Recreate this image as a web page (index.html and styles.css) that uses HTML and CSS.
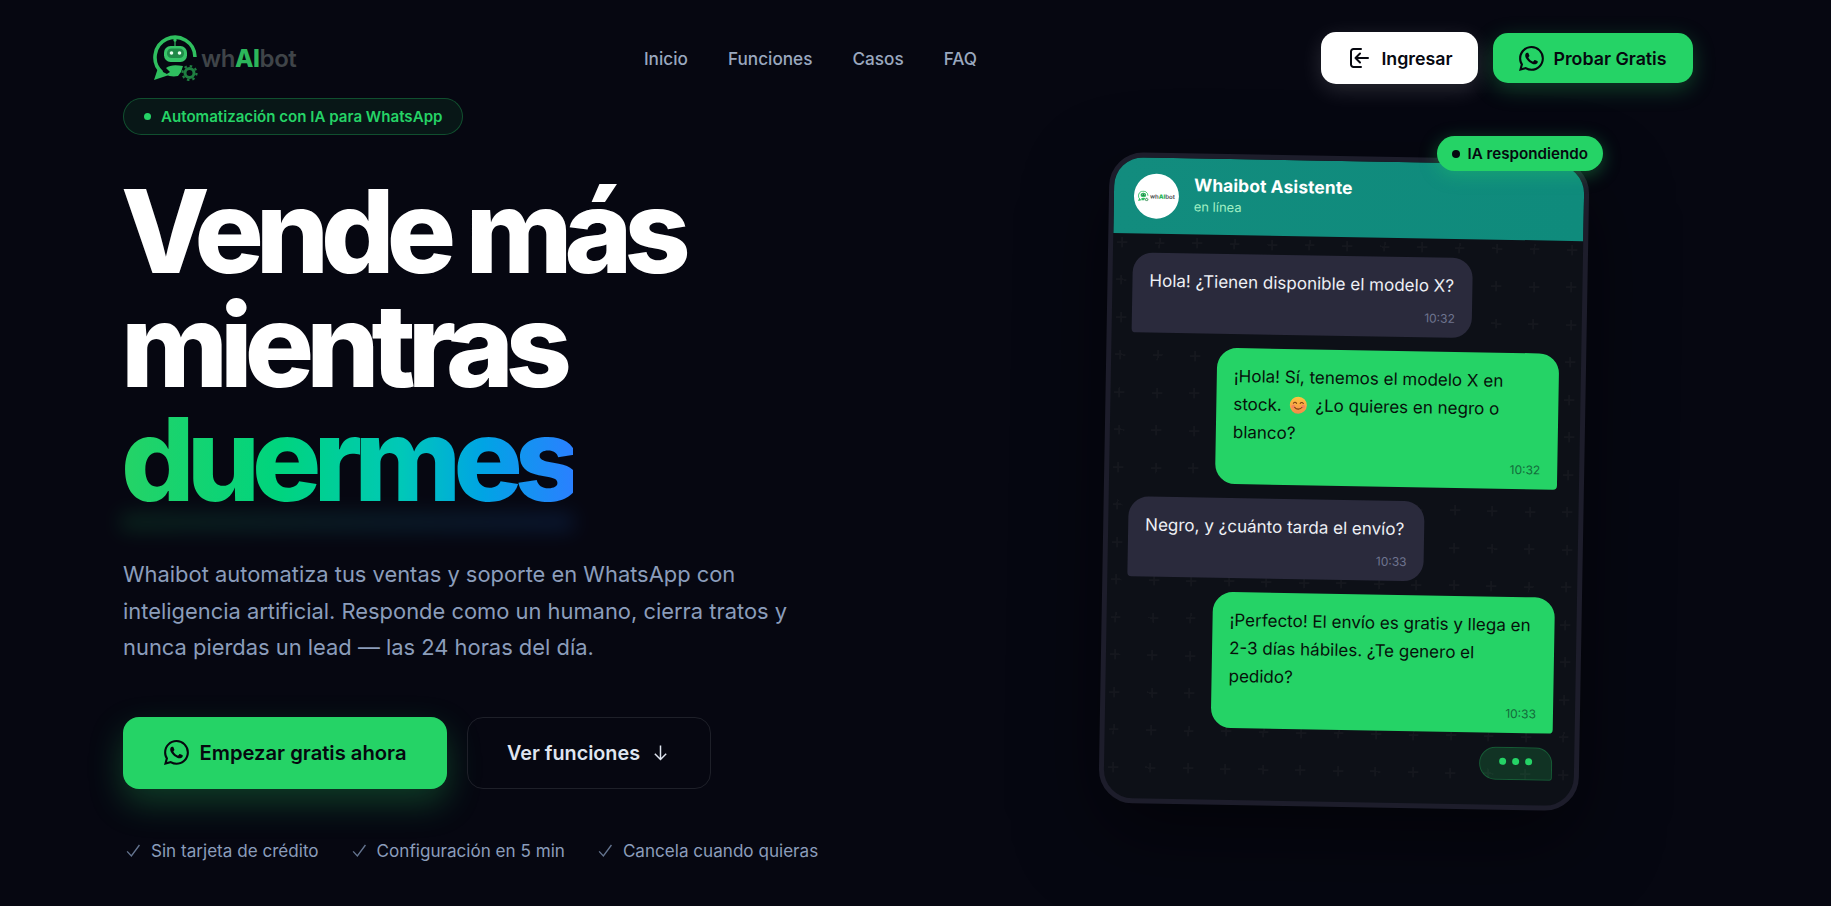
FILE: index.html
```html
<!DOCTYPE html>
<html lang="es">
<head>
    <meta charset="UTF-8">
    <meta name="viewport" content="width=device-width, initial-scale=1.0">
    <title>Whaibot</title>
    <link rel="stylesheet" href="styles.css">
</head>
<body>
    <svg class="icon-defs" aria-hidden="true">
        <symbol id="wa" viewBox="0 0 16 16">
            <path fill="currentColor" d="M13.601 2.326A7.854 7.854 0 0 0 7.994 0C3.627 0 .068 3.558.064 7.926c0 1.399.366 2.76 1.057 3.965L0 16l4.204-1.102a7.933 7.933 0 0 0 3.79.965h.004c4.368 0 7.926-3.558 7.93-7.93A7.898 7.898 0 0 0 13.6 2.326zM7.994 14.521a6.573 6.573 0 0 1-3.356-.92l-.24-.144-2.494.654.666-2.433-.156-.251a6.56 6.56 0 0 1-1.007-3.505c0-3.626 2.957-6.584 6.591-6.584a6.56 6.56 0 0 1 4.66 1.931 6.557 6.557 0 0 1 1.928 4.66c-.004 3.639-2.961 6.592-6.592 6.592zm3.615-4.934c-.197-.099-1.17-.578-1.353-.646-.182-.065-.315-.099-.445.099-.133.197-.513.646-.627.775-.114.133-.232.148-.43.05-.197-.1-.836-.308-1.592-.985-.59-.525-.985-1.175-1.103-1.372-.114-.198-.011-.304.088-.403.087-.088.197-.232.296-.346.1-.114.133-.198.198-.33.065-.134.034-.248-.015-.347-.05-.099-.445-1.076-.612-1.47-.16-.389-.323-.335-.445-.34-.114-.007-.247-.007-.38-.007a.729.729 0 0 0-.529.247c-.182.198-.691.677-.691 1.654 0 .977.71 1.916.81 2.049.098.133 1.394 2.132 3.383 2.992.47.205.84.326 1.129.418.475.152.904.129 1.246.08.38-.058 1.171-.48 1.338-.943.164-.464.164-.86.114-.943-.049-.084-.182-.133-.38-.232z"/>
        </symbol>
        <symbol id="bot" viewBox="0 0 46 46">
            <path fill="none" stroke="#2fbf5f" stroke-width="3.600" d="M9 37.500A20 20 0 1 1 42 22"/>
            <path fill="#2fbf5f" d="M5 33l5 4 6 3-6 2-9 3z"/>
            <path fill="none" stroke="#2a9f52" stroke-width="1.400" d="M22 5v6"/>
            <circle cx="22" cy="5" r="1.700" fill="#2fbf5f"/>
            <rect x="11" y="11" width="23" height="16" rx="6.500" fill="#37c468"/>
            <rect x="14" y="13.500" width="17" height="9.500" rx="4.500" fill="#1f8a48"/>
            <circle cx="18.500" cy="18" r="1.800" fill="#eafff0"/>
            <circle cx="26.500" cy="18" r="1.800" fill="#eafff0"/>
            <path fill="#2fbf5f" d="M13 33c4-3 9-3.500 17-2l-2 6-3 4c-4 1-9 .5-12-1.500l4-2.500z"/>
            <circle cx="36.500" cy="38" r="4.500" fill="none" stroke="#1f7f41" stroke-width="3"/>
            <circle cx="36.500" cy="38" r="7" fill="none" stroke="#1f7f41" stroke-width="2.200" stroke-dasharray="2.500 3"/>
        </symbol>
    </svg>

    <div class="page">
        <!-- Top bar -->
        <header class="nav">
            <a class="logo" href="#">
                <svg class="logo-icon"><use href="#bot"/></svg>
                <span class="logo-text">wh<b>AI</b>bot</span>
            </a>
            <nav class="nav-links">
                <a href="#">Inicio</a>
                <a href="#">Funciones</a>
                <a href="#">Casos</a>
                <a href="#">FAQ</a>
            </nav>
            <div class="nav-actions">
                <a class="btn-login" href="#">
                    <svg viewBox="0 0 24 24" class="login-icon"><path d="M15 3H7.500A2.500 2.500 0 0 0 5 5.500v13A2.500 2.500 0 0 0 7.500 21H15M22 12H9.500M14 7.500L9.500 12l4.500 4.500"/></svg>
                    Ingresar
                </a>
                <a class="btn-try" href="#">
                    <svg class="wa-icon"><use href="#wa"/></svg>
                    Probar Gratis
                </a>
            </div>
        </header>

        <main class="hero">
            <section class="hero-text">
                <div class="pill"><span class="pill-dot"></span>Automatización con IA para WhatsApp</div>
                <h1>Vende más<br>mientras<br><span class="grad">duermes</span></h1>
                <p class="lede">Whaibot automatiza tus ventas y soporte en WhatsApp con inteligencia artificial. Responde como un humano, cierra tratos y nunca pierdas un lead — las 24 horas del día.</p>
                <div class="cta-row">
                    <a class="cta-main" href="#"><svg class="wa-icon"><use href="#wa"/></svg>Empezar gratis ahora</a>
                    <a class="cta-ghost" href="#">Ver funciones
                        <svg viewBox="0 0 24 24" class="arrow-icon"><path d="M12 4v16M5.500 13.500L12 20l6.500-6.500"/></svg>
                    </a>
                </div>
                <ul class="trust">
                    <li><svg viewBox="0 0 20 20" class="check"><path d="M2.500 11l5 5.500L17 3.500"/></svg>Sin tarjeta de crédito</li>
                    <li><svg viewBox="0 0 20 20" class="check"><path d="M2.500 11l5 5.500L17 3.500"/></svg>Configuración en 5 min</li>
                    <li><svg viewBox="0 0 20 20" class="check"><path d="M2.500 11l5 5.500L17 3.500"/></svg>Cancela cuando quieras</li>
                </ul>
            </section>

            <!-- Chat mockup -->
            <aside class="phone-wrap">
                <div class="live-badge"><span class="live-dot"></span>IA respondiendo</div>
                <div class="phone">
                    <div class="chat-head">
                        <div class="avatar">
                            <svg class="avatar-icon"><use href="#bot"/></svg>
                            <span>wh<b>AI</b>bot</span>
                        </div>
                        <div class="chat-info">
                            <div class="chat-name">Whaibot Asistente</div>
                            <div class="chat-status">en línea</div>
                        </div>
                    </div>
                    <div class="chat-body">
                        <div class="msg in">Hola! ¿Tienen disponible el modelo X?<time>10:32</time></div>
                        <div class="msg out">¡Hola! Sí, tenemos el modelo X en stock.
                            <svg viewBox="0 0 20 20" class="emoji">
                                <defs><linearGradient id="face" x1="0" y1="0" x2="0" y2="1"><stop offset="0" stop-color="#fcc73f"/><stop offset="1" stop-color="#f5894a"/></linearGradient></defs>
                                <circle cx="10" cy="10" r="9.500" fill="url(#face)"/>
                                <circle cx="4.500" cy="11.500" r="2" fill="#f7825e"/>
                                <circle cx="15.500" cy="11.500" r="2" fill="#f7825e"/>
                                <path d="M4.500 8c1-1.500 2.500-1.500 3.500 0M12 8c1-1.500 2.500-1.500 3.500 0M6 12.500c2 2.500 6 2.500 8 0" fill="none" stroke="#7a3d12" stroke-width="1.200" stroke-linecap="round"/>
                            </svg>
                            ¿Lo quieres en negro o blanco?<time>10:32</time></div>
                        <div class="msg in short">Negro, y ¿cuánto tarda el envío?<time>10:33</time></div>
                        <div class="msg out">¡Perfecto! El envío es gratis y llega en 2-3 días hábiles. ¿Te genero el pedido?<time>10:33</time></div>
                        <div class="typing"><i></i><i></i><i></i></div>
                    </div>
                </div>
            </aside>
        </main>
    </div>
</body>
</html>
```

FILE: styles.css
```css
/* Reset styles */
* {
    margin: 0;
    padding: 0;
    box-sizing: border-box;
}

body {
    font-family: Inter, "Liberation Sans", sans-serif;
    background-color: #060711;
    color: #fff;
    height: 906px;
    overflow: hidden;
}

a {
    text-decoration: none;
    color: inherit;
}

.icon-defs {
    display: none;
}

.page {
    padding: 0 138px 0 123px;
}

/* Top bar */
.nav {
    display: flex;
    justify-content: space-between;
    align-items: center;
    padding: 32px 0 14px;
}

.logo {
    display: flex;
    align-items: center;
    gap: 2px;
    width: 177px;
    padding-left: 30px;
}

.logo-icon {
    width: 46px;
    height: 46px;
    flex-shrink: 0;
}

.logo-text {
    font-size: 24px;
    font-weight: 600;
    letter-spacing: -0.4px;
    color: #3f4448;
}

.logo-text b {
    color: #2cb65b;
    font-weight: 800;
}

.nav-links {
    display: flex;
    gap: 40px;
    font-size: 17.200px;
    font-weight: 500;
    color: #9aa8bf;
}

.nav-actions {
    display: flex;
    align-items: center;
    gap: 15px;
    font-size: 17.800px;
    font-weight: 600;
    color: #06080f;
}

.btn-login,
.btn-try {
    display: flex;
    align-items: center;
    justify-content: center;
    border-radius: 15px;
}

.btn-login {
    width: 157px;
    height: 52px;
    gap: 11px;
    background-color: #fff;
    box-shadow: 0 6px 22px rgba(255, 255, 255, 0.14);
}

.btn-try {
    width: 200px;
    height: 50px;
    gap: 9px;
    background-color: #25d366;
    box-shadow: 0 6px 22px rgba(37, 211, 102, 0.28);
}

.login-icon {
    width: 24px;
    height: 24px;
    fill: none;
    stroke: #06080f;
    stroke-width: 2;
    stroke-linecap: round;
    stroke-linejoin: round;
}

.wa-icon {
    width: 25px;
    height: 25px;
}

/* Left column */
.hero {
    display: flex;
    justify-content: space-between;
}

.hero-text {
    width: 720px;
}

.pill {
    display: inline-flex;
    align-items: center;
    gap: 10px;
    height: 37px;
    padding: 0 20px;
    border: 1px solid rgba(37, 211, 102, 0.3);
    border-radius: 19px;
    background-color: rgba(37, 211, 102, 0.08);
    color: #25d366;
    font-size: 15.100px;
    font-weight: 600;
}

.pill-dot {
    width: 7px;
    height: 7px;
    border-radius: 50%;
    background-color: #25d366;
}

h1 {
    margin: 39px 0 0 -2px;
    font-size: 115.500px;
    font-weight: 800;
    line-height: 114px;
    letter-spacing: -8px;
}

.grad {
    position: relative;
    display: inline-block;
    background: linear-gradient(90deg, #25d366, #00d47e 35%, #00c8b8 62%, #00a4e4 80%, #2a80ff);
    -webkit-background-clip: text;
    background-clip: text;
    color: transparent;
}

/* Glow under the last word */
.grad::after {
    content: "";
    position: absolute;
    left: 0;
    right: 0;
    bottom: -14px;
    height: 16px;
    background: linear-gradient(90deg, #25d366, #2a80ff);
    filter: blur(10px);
    opacity: 0.16;
}

.lede {
    margin-top: 40px;
    width: 680px;
    font-size: 21.900px;
    line-height: 36.500px;
    color: #8b9dbb;
}

.cta-row {
    display: flex;
    gap: 20px;
    margin-top: 51px;
    font-weight: 600;
}

.cta-main,
.cta-ghost {
    display: flex;
    align-items: center;
    justify-content: center;
    height: 72px;
    border-radius: 16px;
}

.cta-main {
    width: 324px;
    gap: 11px;
    font-size: 20.200px;
    background-color: #25d366;
    color: #06080f;
    box-shadow: 0 14px 34px rgba(37, 211, 102, 0.26);
}

.cta-ghost {
    width: 244px;
    gap: 10px;
    font-size: 19.800px;
    border: 1px solid #1e2029;
    color: #dfe5f0;
}

.arrow-icon {
    width: 21px;
    height: 21px;
    fill: none;
    stroke: #dfe5f0;
    stroke-width: 1.700;
}

.trust {
    display: flex;
    gap: 30px;
    margin-top: 50px;
    list-style: none;
    font-size: 17.100px;
    line-height: 24px;
    color: #8b9dbb;
}

.trust li {
    display: flex;
    align-items: center;
    gap: 9px;
    padding-left: 2px;
}

.check {
    width: 17px;
    height: 17px;
    fill: none;
    stroke: #64748f;
    stroke-width: 1.600;
}

/* Chat mockup */
.phone-wrap {
    position: relative;
    width: 480px;
    height: 651px;
    margin: 58px 109px 0 0;
}

.live-badge {
    position: absolute;
    top: -20px;
    right: -19px;
    z-index: 2;
    display: flex;
    align-items: center;
    gap: 7px;
    height: 35px;
    padding: 0 15px;
    border-radius: 18px;
    background-color: #25d366;
    color: #06080f;
    font-size: 15.200px;
    font-weight: 600;
    box-shadow: 0 4px 18px rgba(37, 211, 102, 0.35);
}

.live-dot {
    width: 8px;
    height: 8px;
    border-radius: 50%;
    background-color: #06080f;
}

.phone {
    height: 100%;
    border: 5px solid #1d1d2b;
    border-radius: 34px;
    background-color: #0d1017;
    overflow: hidden;
    transform: rotate(1deg);
    box-shadow: 0 30px 80px rgba(0, 0, 0, 0.5);
}

.chat-head {
    display: flex;
    align-items: center;
    gap: 15px;
    height: 76px;
    padding: 0 20px;
    background: linear-gradient(90deg, #128c7e, #0f8b7c);
}

.avatar {
    display: flex;
    align-items: center;
    justify-content: center;
    gap: 1px;
    width: 45px;
    height: 45px;
    border-radius: 50%;
    background-color: #fff;
    color: #3f4448;
    font-size: 6px;
    font-weight: 600;
}

.avatar b {
    color: #2cb65b;
}

.avatar-icon {
    width: 11px;
    height: 11px;
}

.chat-info {
    padding-bottom: 4px;
}

.chat-name {
    font-size: 17.400px;
    font-weight: 700;
    letter-spacing: 0.1px;
}

.chat-status {
    margin-top: 3px;
    font-size: 13px;
    color: #a2f0c4;
}

.chat-body {
    display: flex;
    flex-direction: column;
    gap: 14px;
    height: 100%;
    padding: 19px 22px 19px 20px;
    background-image: url("data:image/svg+xml,%3Csvg xmlns='http://www.w3.org/2000/svg' width='37.500' height='37.500'%3E%3Cpath d='M9 4v10M4 9h10' stroke='%23ffffff' stroke-opacity='.03' stroke-width='1.500'/%3E%3C/svg%3E");
}

.msg {
    padding: 14px 17px 11px;
    border-radius: 20px;
    font-size: 17px;
    line-height: 28px;
}

.msg time {
    display: block;
    margin-top: 11px;
    text-align: right;
    font-size: 12px;
    line-height: 16px;
}

.msg.in {
    align-self: flex-start;
    width: 340px;
    background-color: #2a2a3c;
    border-bottom-left-radius: 4px;
    color: #eef0f5;
}

.msg.in.short {
    width: 296px;
}

.msg.in time {
    color: #6f7590;
}

.msg.out {
    align-self: flex-end;
    width: 342px;
    background-color: #25d366;
    border-bottom-right-radius: 4px;
    color: #06110a;
}

.msg.out time {
    color: #136b3b;
}

.emoji {
    width: 18px;
    height: 18px;
    margin: 0 3px;
    vertical-align: -3px;
}

.typing {
    align-self: flex-end;
    display: flex;
    justify-content: center;
    gap: 6px;
    width: 73px;
    height: 33px;
    padding-top: 10px;
    border: 1px solid rgba(37, 211, 102, 0.25);
    border-radius: 20px 20px 3px 20px;
    background-color: rgba(37, 211, 102, 0.18);
}

.typing i {
    width: 7px;
    height: 7px;
    border-radius: 50%;
    background-color: #25d366;
}
```
